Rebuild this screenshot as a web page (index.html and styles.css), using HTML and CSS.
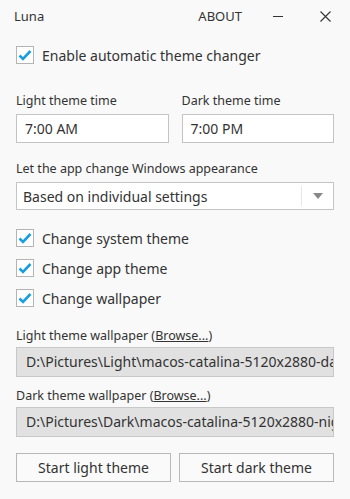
FILE: index.html
```html
<!DOCTYPE html>
<html lang="en">
<head>
    <title>Luna</title>
    <link rel="stylesheet" href="styles.css">
</head>
<body>
    <div class="titlebar">
        <span class="app-name">Luna</span>
        <span class="about">ABOUT</span>
        <span class="win-btn minimize">
            <svg width="10" height="10" viewBox="0 0 10 10"><path d="M0 5.5H10" stroke="#333" stroke-width="1"/></svg>
        </span>
        <span class="win-btn close">
            <svg width="11" height="11" viewBox="0 0 11 11"><path d="M0.5 0.5L10.5 10.5M10.5 0.5L0.5 10.5" stroke="#333" stroke-width="1.1"/></svg>
        </span>
    </div>

    <div class="content">
        <label class="check first">
            <span class="box"><svg width="14" height="12" viewBox="0 0 14 12"><path d="M1.5 6.5L5 10L12.5 2" fill="none" stroke="#1a9ee0" stroke-width="2.6"/></svg></span>
            Enable automatic theme changer
        </label>

        <div class="times">
            <div class="field">
                <div class="label">Light theme time</div>
                <div class="input">7:00 AM</div>
            </div>
            <div class="field">
                <div class="label">Dark theme time</div>
                <div class="input">7:00 PM</div>
            </div>
        </div>

        <div class="label select-label">Let the app change Windows appearance</div>
        <div class="select">
            <span class="select-text">Based on individual settings</span>
            <span class="select-sep"></span>
            <span class="select-arrow"></span>
        </div>

        <div class="checks">
            <label class="check">
                <span class="box"><svg width="14" height="12" viewBox="0 0 14 12"><path d="M1.5 6.5L5 10L12.5 2" fill="none" stroke="#1a9ee0" stroke-width="2.6"/></svg></span>
                Change system theme
            </label>
            <label class="check">
                <span class="box"><svg width="14" height="12" viewBox="0 0 14 12"><path d="M1.5 6.5L5 10L12.5 2" fill="none" stroke="#1a9ee0" stroke-width="2.6"/></svg></span>
                Change app theme
            </label>
            <label class="check">
                <span class="box"><svg width="14" height="12" viewBox="0 0 14 12"><path d="M1.5 6.5L5 10L12.5 2" fill="none" stroke="#1a9ee0" stroke-width="2.6"/></svg></span>
                Change wallpaper
            </label>
        </div>

        <div class="label wall-label">Light theme wallpaper (<a href="#">Browse...</a>)</div>
        <div class="input disabled">D:\Pictures\Light\macos-catalina-5120x2880-day.jpg</div>

        <div class="label wall-label second">Dark theme wallpaper (<a href="#">Browse...</a>)</div>
        <div class="input disabled">D:\Pictures\Dark\macos-catalina-5120x2880-night.jpg</div>

        <div class="buttons">
            <button class="btn">Start light theme</button>
            <button class="btn">Start dark theme</button>
        </div>
    </div>
</body>
</html>
```

FILE: styles.css
```css
* {
    box-sizing: border-box;
    margin: 0;
    padding: 0;
}

body {
    background-color: #f9f9f9;
    font-family: "Noto Sans", "Open Sans", sans-serif;
    color: #333;
    width: 350px;
    height: 499px;
    overflow: hidden;
}

.titlebar {
    height: 32px;
    display: flex;
    align-items: center;
    padding: 0 0 0 14px;
    font-size: 13px;
}

.app-name {
    flex: 1;
}

.about {
    margin-right: 31px;
}

.win-btn {
    display: flex;
    align-items: center;
    justify-content: center;
}

.minimize {
    margin-right: 37px;
}

.close {
    margin-right: 19px;
}

.content {
    padding: 0 16px;
}

.check {
    display: flex;
    align-items: center;
    height: 18px;
    font-size: 14px;
}

.check.first {
    margin-top: 14px;
}

.box {
    width: 18px;
    height: 18px;
    border: 1px solid #b4b4b4;
    background: #fff;
    display: flex;
    align-items: center;
    justify-content: center;
    margin-right: 8px;
}

.times {
    display: flex;
    gap: 13px;
    margin-top: 27px;
}

.field {
    flex: 1;
}

.label {
    font-size: 12.5px;
    line-height: 20px;
    height: 20px;
}

.input {
    margin-top: 3px;
    height: 29px;
    border: 1px solid #c4c4c4;
    background: #fff;
    font-size: 14px;
    line-height: 27px;
    padding: 0 8px;
    white-space: nowrap;
    overflow: hidden;
}

.select-label {
    margin-top: 16px;
}

.select {
    margin-top: 3px;
    height: 28px;
    border: 1px solid #c4c4c4;
    background: #fff;
    display: flex;
    align-items: center;
    font-size: 14px;
    padding-left: 6px;
}

.select-text {
    flex: 1;
}

.select-sep {
    width: 1px;
    height: 20px;
    background: #e6e6e6;
}

.select-arrow {
    width: 0;
    height: 0;
    border-left: 5px solid transparent;
    border-right: 5px solid transparent;
    border-top: 6px solid #888;
    margin: 0 10px 0 11px;
}

.checks {
    margin-top: 19px;
    display: flex;
    flex-direction: column;
    gap: 12px;
}

.wall-label {
    margin-top: 19px;
}

.wall-label.second {
    margin-top: 9px;
}

.wall-label + .input {
    margin-top: 1px;
    height: 30px;
    line-height: 28px;
}

.input.disabled {
    background: #e1e1e1;
    border-color: #c8c8c8;
    padding-left: 9px;
}

a {
    color: #333;
    text-decoration: underline;
}

.buttons {
    display: flex;
    gap: 8px;
    margin-top: 16px;
}

.btn {
    flex: 1;
    height: 29px;
    border: 1px solid #b8b8b8;
    background: #fafafa;
    font: inherit;
    font-size: 14px;
    color: #333;
}
```
